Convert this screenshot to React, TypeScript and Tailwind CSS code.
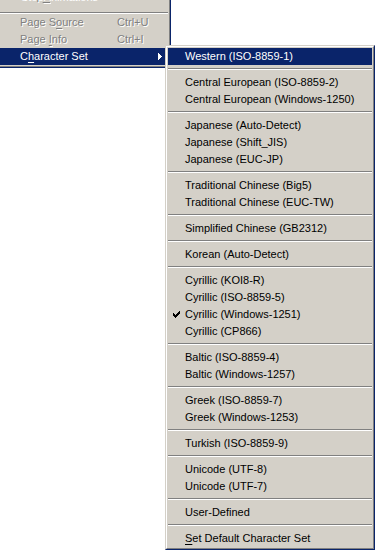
import React from "react";

const FONT = { fontFamily: '"Liberation Sans", Arial, sans-serif' };

function Check() {
  return (
    <svg width="7" height="7" viewBox="0 0 7 7" shapeRendering="crispEdges" className="block">
      <rect x="6" y="0" width="1" height="1" fill="#000" />
      <rect x="5" y="1" width="2" height="1" fill="#000" />
      <rect x="0" y="2" width="1" height="1" fill="#000" />
      <rect x="4" y="2" width="3" height="1" fill="#000" />
      <rect x="0" y="3" width="2" height="1" fill="#000" />
      <rect x="3" y="3" width="3" height="1" fill="#000" />
      <rect x="0" y="4" width="5" height="1" fill="#000" />
      <rect x="1" y="5" width="3" height="1" fill="#000" />
      <rect x="2" y="6" width="1" height="1" fill="#000" />
    </svg>
  );
}

function Arrow() {
  return (
    <svg width="4" height="7" viewBox="0 0 4 7" shapeRendering="crispEdges" className="block">
      <rect x="0" y="0" width="1" height="7" fill="#fff" />
      <rect x="1" y="1" width="1" height="5" fill="#fff" />
      <rect x="2" y="2" width="1" height="3" fill="#fff" />
      <rect x="3" y="3" width="1" height="1" fill="#fff" />
    </svg>
  );
}

function Sep() {
  return (
    <div className="h-[9px] pt-[3px]">
      <div className="h-px bg-[#808080]" />
      <div className="h-px bg-white" />
    </div>
  );
}

const groups: { label: React.ReactNode; checked?: boolean; active?: boolean }[][] = [
  [{ label: "Western (ISO-8859-1)", active: true }],
  [{ label: "Central European (ISO-8859-2)" }, { label: "Central European (Windows-1250)" }],
  [
    { label: "Japanese (Auto-Detect)" },
    { label: "Japanese (Shift_JIS)" },
    { label: "Japanese (EUC-JP)" },
  ],
  [{ label: "Traditional Chinese (Big5)" }, { label: "Traditional Chinese (EUC-TW)" }],
  [{ label: "Simplified Chinese (GB2312)" }],
  [{ label: "Korean (Auto-Detect)" }],
  [
    { label: "Cyrillic (KOI8-R)" },
    { label: "Cyrillic (ISO-8859-5)" },
    { label: "Cyrillic (Windows-1251)", checked: true },
    { label: "Cyrillic (CP866)" },
  ],
  [{ label: "Baltic (ISO-8859-4)" }, { label: "Baltic (Windows-1257)" }],
  [{ label: "Greek (ISO-8859-7)" }, { label: "Greek (Windows-1253)" }],
  [{ label: "Turkish (ISO-8859-9)" }],
  [{ label: "Unicode (UTF-8)" }, { label: "Unicode (UTF-7)" }],
  [{ label: "User-Defined" }],
  [
    {
      label: (
        <>
          <span className="underline underline-offset-[2px]">S</span>et Default Character Set
        </>
      ),
    },
  ],
];

export default function App() {
  return (
    <div
      className="relative w-[375px] h-[550px] bg-white overflow-hidden text-[11px] leading-none text-black"
      style={FONT}
    >
      {/* Parent menu */}
      <div className="absolute left-[-3px] top-[-15px] w-[174px] border border-t-[#d4d0c8] border-l-[#d4d0c8] border-r-[#0a246a] border-b-[#0a246a] bg-[#d4d0c8]">
        <div className="border border-t-white border-l-white border-r-[#808080] border-b-[#808080] p-px">
          <div className="h-[17px] flex items-center pl-[20px] text-[#808080] [text-shadow:1px_1px_0_#fff]">
            Stop <span className="underline underline-offset-[2px]">A</span>nimations
          </div>
          <div className="h-[9px] pt-[7px]">
            <div className="h-px bg-[#808080]" />
            <div className="h-px bg-white" />
          </div>
          <div className="h-[17px] flex items-center pl-[20px] text-[#808080] [text-shadow:1px_1px_0_#fff]">
            <span className="w-[97px]">
              Page S<span className="underline underline-offset-[2px]">o</span>urce
            </span>
            <span>Ctrl+U</span>
          </div>
          <div className="h-[17px] flex items-center pl-[20px] text-[#808080] [text-shadow:1px_1px_0_#fff]">
            <span className="w-[97px]">
              Page <span className="underline underline-offset-[2px]">I</span>nfo
            </span>
            <span>Ctrl+I</span>
          </div>
          <div className="h-[17px] flex items-center pl-[20px] bg-[#0a246a] text-white">
            <span className="flex-1">
              C<span className="underline underline-offset-[2px]">h</span>aracter Set
            </span>
            <span className="mr-[6px]">
              <Arrow />
            </span>
          </div>
        </div>
      </div>

      {/* Submenu */}
      <div className="absolute left-[165px] top-[45px] w-[210px] border border-t-[#d4d0c8] border-l-[#d4d0c8] border-r-[#0a246a] border-b-[#0a246a] bg-[#d4d0c8]">
        <div className="border border-t-white border-l-white border-r-[#808080] border-b-[#808080] p-px">
          {groups.map((g, gi) => (
            <React.Fragment key={gi}>
              {gi > 0 && <Sep />}
              {g.map((it, ii) => (
                <div
                  key={ii}
                  className={
                    "h-[17px] flex items-center " +
                    (it.active ? "bg-[#0a246a] text-white" : "text-black")
                  }
                >
                  <div className="w-[17px] flex justify-center">{it.checked ? <Check /> : null}</div>
                  <span>{it.label}</span>
                </div>
              ))}
            </React.Fragment>
          ))}
        </div>
      </div>
    </div>
  );
}
